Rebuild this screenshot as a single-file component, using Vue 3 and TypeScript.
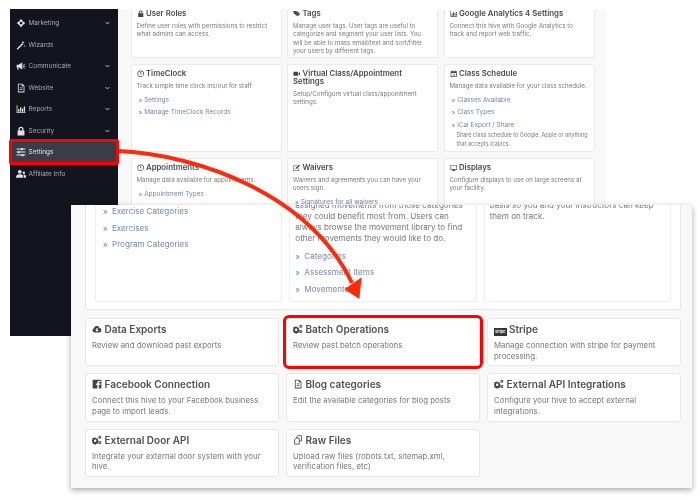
<script setup lang="ts">
interface NavItem { label: string; icon: string; caret: boolean; active?: boolean }
interface BackCard { title: string; icon: string; text: string; links?: string[]; note?: string }
interface FrontCard { title: string; icon: string; text: string; marked?: boolean }

const nav: NavItem[] = [
  { label: 'Marketing', icon: 'bullseye', caret: true },
  { label: 'Wizards', icon: 'wand', caret: false },
  { label: 'Communicate', icon: 'megaphone', caret: true },
  { label: 'Website', icon: 'file', caret: true },
  { label: 'Reports', icon: 'chart', caret: true },
  { label: 'Security', icon: 'lock', caret: true },
  { label: 'Settings', icon: 'sliders', caret: false, active: true },
  { label: 'Affiliate Info', icon: 'users', caret: false },
]

const backCards: BackCard[] = [
  { title: 'User Roles', icon: 'lock', text: 'Define user roles with permissions to restrict what admins can access.' },
  { title: 'Tags', icon: 'tags', text: 'Manage user tags. User tags are useful to categorize and segment your user lists. You will be able to mass email/text and sort/filter your users by different tags.' },
  { title: 'Google Analytics 4 Settings', icon: 'chart', text: 'Connect this hive with Google Analytics to track and report web traffic.' },
  { title: 'TimeClock', icon: 'clock', text: 'Track simple time clock ins/out for staff', links: ['Settings', 'Manage TimeClock Records'] },
  { title: 'Virtual Class/Appointment Settings', icon: 'video', text: 'Setup/Configure virtual class/appointment settings.' },
  { title: 'Class Schedule', icon: 'calendar', text: 'Manage data available for your class schedule.', links: ['Classes Available', 'Class Types', 'iCal Export / Share'], note: 'Share class schedule to Google, Apple or anything that accepts ical/ics.' },
  { title: 'Appointments', icon: 'clock', text: 'Manage data available for appointments.', links: ['Appointment Types'] },
  { title: 'Waivers', icon: 'edit', text: 'Waivers and agreements you can have your users sign.', links: ['Signatures for all waivers'] },
  { title: 'Displays', icon: 'display', text: 'Configure displays to use on large screens at your facility.' },
]

const movementLinks = ['Categories', 'Assessment Items', 'Movements']
const programLinks = ['Exercise Categories', 'Exercises', 'Program Categories']

const frontCards: FrontCard[] = [
  { title: 'Data Exports', icon: 'cloud', text: 'Review and download past exports' },
  { title: 'Batch Operations', icon: 'cogs', text: 'Review past batch operations', marked: true },
  { title: 'Stripe', icon: 'stripe', text: 'Manage connection with stripe for payment processing.' },
  { title: 'Facebook Connection', icon: 'facebook', text: 'Connect this hive to your Facebook business page to import leads.' },
  { title: 'Blog categories', icon: 'file', text: 'Edit the available categories for blog posts' },
  { title: 'External API Integrations', icon: 'cogs', text: 'Configure your hive to accept external integrations.' },
  { title: 'External Door API', icon: 'cogs', text: 'Integrate your external door system with your hive.' },
  { title: 'Raw Files', icon: 'copy', text: 'Upload raw files (robots.txt, sitemap.xml, verification files, etc)' },
]
</script>

<template>
  <div class="canvas">
    <svg width="0" height="0" class="defs" aria-hidden="true">
      <symbol id="i-bullseye" viewBox="0 0 16 16"><path d="M8 1l2.200 3.200a4.200 4.200 0 0 1 1.600 1.600L15 8l-3.200 2.200a4.200 4.200 0 0 1-1.600 1.600L8 15l-2.200-3.200a4.200 4.200 0 0 1-1.600-1.600L1 8l3.200-2.200a4.200 4.200 0 0 1 1.600-1.600z" /><circle cx="8" cy="8" r="2.200" fill="#14141f" /></symbol>
      <symbol id="i-wand" viewBox="0 0 16 16"><path d="M1 14l9-9 1.600 1.600-9 9zM11 1l1 2 2 .6-2 .8-.8 2-.8-2-2-.8 2-.6zM14 8l.5 1 1 .5-1 .5-.5 1-.5-1-1-.5 1-.5z" /></symbol>
      <symbol id="i-megaphone" viewBox="0 0 16 16"><path d="M1 6h3l6-3.500v11L4 10H3.500l1 4H2.600l-1-4H1zM11 6.500l3-2v1.300l-3 1.700zM11 8h4v1h-4zM11 9.800l3 1.700v1.300l-3-2z" /></symbol>
      <symbol id="i-file" viewBox="0 0 16 16"><path fill-rule="evenodd" d="M3 1h7l3.500 3.500V15H3zm1.300 1.300v11.400h7.900V5.300H9.200v-3zM6 7h4.500v1.200H6zm0 2.500h4.500v1.200H6z" /></symbol>
      <symbol id="i-chart" viewBox="0 0 16 16"><path d="M1 2h1.300v11H15v1.300H1zM3.500 8h2v4.500h-2zM6.500 5h2v7.500h-2zM9.500 7h2v5.500h-2zM12.500 4h2v8.500h-2z" /></symbol>
      <symbol id="i-lock" viewBox="0 0 16 16"><path fill-rule="evenodd" d="M4 7V5a4 4 0 0 1 8 0v2h1.500v8h-11V7zm2 0h4V5a2 2 0 0 0-4 0z" /></symbol>
      <symbol id="i-sliders" viewBox="0 0 16 16"><path d="M1 2.500h7V1.500h3v1h4v1.500h-4v1H8V4H1zM1 7.300h2V6.300h3v1h9v1.500H6v1H3v-1H1zM1 12.100h8v-1h3v1h3v1.500h-3v1H9v-1H1z" /></symbol>
      <symbol id="i-users" viewBox="0 0 16 16"><circle cx="6" cy="4.500" r="3" /><path d="M0 14c0-4 2.500-5.500 6-5.500s4.500 1 5 2V14z" /><circle cx="12.500" cy="6" r="2" /><path d="M12 9h1.500c1.500 0 2.500 1 2.500 3v2h-3.800v-3.500z" /></symbol>
      <symbol id="i-tags" viewBox="0 0 16 16"><path d="M1 2h5.500L13 8.500 8.500 13 1 6.500zM8 2h1.500l6 6.500L11 13.500l-1-1 3.600-4z" /></symbol>
      <symbol id="i-clock" viewBox="0 0 16 16"><path fill-rule="evenodd" d="M8 1a7 7 0 1 1 0 14A7 7 0 0 1 8 1zm0 1.500a5.500 5.500 0 1 0 0 11 5.500 5.500 0 0 0 0-11zM7.300 4.500h1.400v3.300H11v1.400H7.300z" /></symbol>
      <symbol id="i-video" viewBox="0 0 16 16"><path d="M1 3.500h9.500v9H1zM11.500 7L15 4v8l-3.500-3z" /></symbol>
      <symbol id="i-calendar" viewBox="0 0 16 16"><path fill-rule="evenodd" d="M4 1h1.500v1.500h5V1H12v1.500h2.500V15h-13V2.500H4zM3 6.500V13.500h10V6.500zM7.500 9h3v2.500h-3z" /></symbol>
      <symbol id="i-edit" viewBox="0 0 16 16"><path fill-rule="evenodd" d="M1 3h8L7.700 4.300H2.300v9.400h9.400V9.500L13 8.200V15H1zM13 1l2 2-7 7-2.700.7L6 8z" /></symbol>
      <symbol id="i-display" viewBox="0 0 16 16"><path fill-rule="evenodd" d="M1 2h14v10H9.500v1.500H11V15H5v-1.500h1.500V12H1zm1.300 1.300v7.400h11.400V3.300z" /></symbol>
      <symbol id="i-cloud" viewBox="0 0 16 16"><path fill-rule="evenodd" d="M4 13.500A3.500 3.500 0 0 1 3 6.700 4.500 4.500 0 0 1 11.600 5.800 3.900 3.900 0 0 1 12 13.500zM7 6.500V9.500H5.200L8 12.300l2.800-2.800H9V6.500z" /></symbol>
      <symbol id="i-cogs" viewBox="0 0 16 16"><path fill-rule="evenodd" d="M5.800 4l.4 1.200 1.200.5 1.100-.6 1.200 1.200-.6 1.100.5 1.200 1.200.4v1.600l-1.200.4-.5 1.200.6 1.100-1.200 1.200-1.100-.6-1.200.5-.4 1.200H4.200l-.4-1.200-1.200-.5-1.100.6L.3 12.500l.6-1.100-.5-1.200L-.8 9.800V8.200l1.200-.4.500-1.200-.6-1.100 1.200-1.200 1.100.6 1.200-.5L4.200 4zM5 7a2 2 0 1 0 0 4 2 2 0 0 0 0-4z" /><path fill-rule="evenodd" d="M12.500 1a2.500 2.500 0 1 1 0 5 2.500 2.500 0 0 1 0-5zm0 1.600a.9.900 0 1 0 0 1.800.9.900 0 0 0 0-1.800zM12.500 9.500a2.500 2.500 0 1 1 0 5 2.500 2.500 0 0 1 0-5zm0 1.600a.9.900 0 1 0 0 1.800.9.900 0 0 0 0-1.800z" /></symbol>
      <symbol id="i-facebook" viewBox="0 0 16 16"><path d="M1.500 1h13a.5.500 0 0 1 .5.500v13a.5.500 0 0 1-.5.500H11V9.500h2l.4-2.300H11V6c0-.8.300-1.200 1.200-1.200h1.300V2.800c-.6-.1-1.200-.2-1.900-.2C10 2.600 8.700 3.900 8.700 5.700v1.500H6.700v2.300h2V15H1.500a.5.500 0 0 1-.5-.5v-13A.5.500 0 0 1 1.500 1z" /></symbol>
      <symbol id="i-copy" viewBox="0 0 16 16"><path fill="none" stroke="currentColor" stroke-width="1.300" d="M6 5V2.500L8 1h5.500v8.500H10M3 6.500L5.500 5H10v9.500H2.500V7z" /></symbol>
    </svg>

    <section class="window back-window">
      <aside class="sidebar">
        <div
          v-for="item in nav"
          :key="item.label"
          class="nav-item"
          :class="{ active: item.active }"
        >
          <svg class="nav-icon"><use :href="`#i-${item.icon}`" /></svg>
          <span class="nav-label">{{ item.label }}</span>
          <svg v-if="item.caret" class="nav-caret" viewBox="0 0 8 6"><path d="M1 1.500l3 3 3-3" /></svg>
        </div>
      </aside>
      <main class="back-main">
        <div class="back-grid">
          <article v-for="card in backCards" :key="card.title" class="back-card">
            <h3 class="back-title">
              <svg class="back-icon"><use :href="`#i-${card.icon}`" /></svg>
              {{ card.title }}
            </h3>
            <p class="back-text">{{ card.text }}</p>
            <a v-for="link in card.links" :key="link" class="back-link"><span>»</span> {{ link }}</a>
            <p v-if="card.note" class="back-note">{{ card.note }}</p>
          </article>
        </div>
      </main>
    </section>

    <div class="settings-mark"></div>

    <section class="window front-window">
      <div class="outer-card">
        <div class="inner-card">
          <a v-for="link in programLinks" :key="link" class="front-link"><span>»</span> {{ link }}</a>
        </div>
        <div class="inner-card movement">
          <p class="inner-text">assigned movements from those categories they could benefit most from. Users can always browse the movement library to find other movements they would like to do.</p>
          <a v-for="link in movementLinks" :key="link" class="front-link"><span>»</span> {{ link }}</a>
        </div>
        <div class="inner-card progress">
          <p class="inner-text">basis so you and your instructors can keep them on track.</p>
        </div>
      </div>
      <div class="front-grid">
        <article
          v-for="card in frontCards"
          :key="card.title"
          class="front-card"
          :class="{ marked: card.marked }"
        >
          <h3 class="front-title">
            <span v-if="card.icon === 'stripe'" class="stripe-badge">stripe</span>
            <svg v-else class="front-icon"><use :href="`#i-${card.icon}`" /></svg>
            {{ card.title }}
          </h3>
          <p class="front-text">{{ card.text }}</p>
        </article>
      </div>
    </section>

    <svg class="arrow" width="700" height="500" viewBox="0 0 700 500" aria-hidden="true">
      <path d="M119 151C200 155 310 195 352 283" fill="none" stroke="#ff2a0c" stroke-width="4" />
      <path d="M344.300 289.300L361.700 277.300L359.300 299Z" fill="#ff2a0c" />
    </svg>
  </div>
</template>

<style>
html, body { margin: 0; background: #fff; }
</style>

<style scoped>
.canvas {
  position: relative;
  width: 700px;
  height: 500px;
  overflow: hidden;
  background: #fff;
  font-family: Inter, "Open Sans", sans-serif;
}
.defs { position: absolute; }
.window { position: absolute; box-sizing: border-box; }
.back-window {
  left: 10px;
  top: 9px;
  width: 596px;
  height: 327px;
  display: flex;
  overflow: hidden;
  background: #f8f8f8;
  filter: blur(0.45px);
}
.sidebar {
  width: 108px;
  flex: none;
  padding-top: 3.500px;
  background: #14141f;
  box-sizing: border-box;
}
.nav-item {
  height: 21.500px;
  display: flex;
  align-items: center;
  padding: 0 8px 0 6px;
  color: #a9a9b2;
  font-size: 6.500px;
}
.nav-item.active {
  background: #3c3c46;
  color: #e0e0e4;
}
.nav-icon {
  width: 10px;
  height: 10px;
  flex: none;
  margin-right: 2.500px;
  fill: #e2e2e6;
}
.nav-label { flex: 1; white-space: nowrap; }
.nav-caret {
  width: 5px;
  height: 4px;
  fill: none;
  stroke: #d0d0d6;
  stroke-width: 1.500;
}
.settings-mark {
  position: absolute;
  left: 9px;
  top: 138.500px;
  width: 110px;
  height: 26px;
  box-sizing: border-box;
  border: 3px solid #f00;
  border-radius: 3px;
}
.back-main {
  flex: 1;
  padding: 0 11.500px 0 12.500px;
}
.back-grid {
  display: grid;
  grid-template-columns: repeat(3, 1fr);
  grid-template-rows: 49px 88.500px 120px;
  gap: 5.500px;
}
.back-card {
  padding: 0 5px;
  background: #fff;
  border: 1px solid #ebebeb;
  border-top: 0;
  border-radius: 2px;
  color: #7a7a7a;
}
.back-card:nth-child(n + 4) { border-top: 1px solid #ebebeb; padding-top: 4.500px; }
.back-title {
  margin: 0 0 4.500px;
  color: #4a4a4a;
  font-size: 7.800px;
  line-height: 8px;
  font-weight: 600;
}
.back-icon {
  width: 7.500px;
  height: 7.500px;
  fill: #444;
  color: #444;
  vertical-align: -1px;
}
.back-text {
  margin: 0 0 3.500px;
  font-size: 6.200px;
  line-height: 8.600px;
}
.back-link {
  display: block;
  padding-left: 2px;
  color: #7288a8;
  font-size: 6.500px;
  line-height: 12.600px;
}
.back-note {
  margin: 0;
  padding-left: 7px;
  font-size: 5.500px;
  line-height: 9px;
}
.front-window {
  left: 71px;
  top: 205px;
  width: 621px;
  height: 283px;
  padding: 0 11px 0 14px;
  overflow: hidden;
  background: #f8f8f8;
  box-shadow: 0 2px 6px rgba(0, 0, 0, 0.35);
  filter: blur(0.3px);
}
.outer-card {
  display: grid;
  grid-template-columns: repeat(3, 1fr);
  gap: 7px;
  height: 105px;
  padding: 0 9px 7px;
  box-sizing: border-box;
  background: #fff;
  border: 1px solid #e8e8e8;
  border-top: 0;
  border-radius: 0 0 2px 2px;
}
.inner-card {
  padding: 0 5px;
  border: 1px solid #efefef;
  border-top: 0;
  border-radius: 0 0 3px 3px;
}
.inner-text {
  margin: -5.500px 0 4px;
  color: #777;
  font-size: 8.100px;
  line-height: 11px;
}
.front-link {
  display: block;
  color: #7288a8;
  font-size: 8.100px;
  line-height: 16.500px;
}
.front-link span { margin-right: 2px; }
.inner-card:first-child { padding-left: 7px; }
.inner-card:first-child .front-link:first-child { margin-top: -2px; }
.front-grid {
  display: grid;
  grid-template-columns: repeat(3, 1fr);
  grid-auto-rows: 48.500px;
  gap: 7px;
  margin-top: 7.500px;
}
.front-card {
  padding: 4px 6px;
  background: #fff;
  border: 1px solid #e8e8e8;
  border-radius: 3px;
  color: #777;
}
.front-card.marked {
  outline: 3px solid #f00;
  outline-offset: 0;
}
.front-title {
  margin: 0 0 4px;
  color: #505050;
  font-size: 10px;
  line-height: 13px;
  font-weight: 600;
  white-space: nowrap;
}
.front-icon {
  width: 10px;
  height: 10px;
  fill: #444;
  color: #444;
  vertical-align: -1px;
}
.stripe-badge {
  display: inline-block;
  width: 12.500px;
  height: 8.500px;
  background: #333;
  color: #fff;
  font-size: 3.800px;
  line-height: 8.500px;
  text-align: center;
  vertical-align: 0;
}
.front-text {
  margin: 0;
  font-size: 7.850px;
  line-height: 10.800px;
}
.arrow {
  position: absolute;
  left: 0;
  top: 0;
  pointer-events: none;
}
</style>
